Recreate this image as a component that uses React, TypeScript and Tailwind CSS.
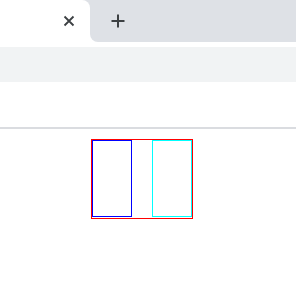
export default function App() {
  return (
    <div className="flex h-[296px] w-[296px] flex-col overflow-hidden bg-white">
      {/* tab strip */}
      <div className="flex h-[42px] shrink-0 bg-[#dee1e6]">
        <div className="flex w-[90px] items-center justify-end rounded-tr-[8px] bg-white pr-[15px]">
          <svg width="12" height="12" viewBox="0 0 12 12" className="text-[#3c4043]">
            <path d="M1.5 1.5 L10.5 10.5 M10.5 1.5 L1.5 10.5" stroke="currentColor" strokeWidth="1.8" />
          </svg>
        </div>
        <div className="flex-1 bg-white">
          <div className="flex h-full items-center rounded-bl-[8px] bg-[#dee1e6] pl-[21px]">
            <svg width="14" height="14" viewBox="0 0 14 14" className="text-[#3c4043]">
              <path d="M7 0.5 V13.5 M0.5 7 H13.5" stroke="currentColor" strokeWidth="2" />
            </svg>
          </div>
        </div>
      </div>

      {/* toolbar */}
      <div className="mt-[5px] h-[35px] shrink-0 bg-[#f1f3f4]" />
      <div className="h-[45px] shrink-0" />
      <div className="h-[2px] shrink-0 bg-[#dadce0]" />

      {/* page */}
      <div className="pl-[91px] pt-[10px]">
        <div className="flex h-[80px] w-[102px] justify-between border border-[#ff0000]">
          <div className="h-[77px] w-[40px] border border-[#0000ff]" />
          <div className="h-[77px] w-[40px] border border-[#00ffff]" />
        </div>
      </div>
    </div>
  )
}
